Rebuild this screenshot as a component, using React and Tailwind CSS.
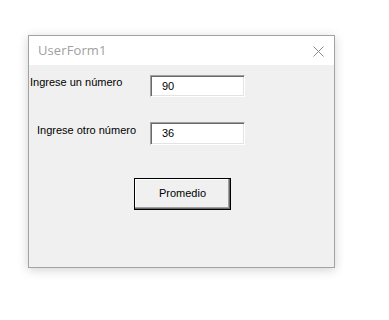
export default function App() {
  const tb =
    "w-[95px] h-[22px] bg-white border-t border-l border-t-[#a0a0a0] border-l-[#a0a0a0] border-r border-b border-r-white border-b-white shadow-[inset_1px_1px_0_#696969,inset_-1px_-1px_0_#e3e3e3] flex items-center pl-[11px] text-[11px] text-black";
  return (
    <div className="w-[389px] h-[320px] bg-white pt-[35px] pl-[28px]" style={{ fontFamily: '"Liberation Sans", Arial, sans-serif' }}>
      <div className="w-[307px] h-[233px] border border-[#a3a3a3] bg-[#f0f0f0] shadow-[0_2px_10px_rgba(0,0,0,0.18)] flex flex-col">
        <div className="h-[29px] bg-white flex items-center justify-between pl-[9px] pr-[10px]">
          <span className="text-[13px] text-[#a0a0a0] tracking-[0.1px]" style={{ fontFamily: '"Open Sans", "Noto Sans", sans-serif' }}>UserForm1</span>
          <svg width="11" height="11" viewBox="0 0 11 11" className="mt-[1px]">
            <path d="M0.5 0.5 L10.5 10.5 M10.5 0.5 L0.5 10.5" stroke="#8a8a8a" strokeWidth="1" fill="none" />
          </svg>
        </div>
        <div className="flex flex-col pt-[10px]">
          <div className="flex items-start">
            <div className="w-[121px] pl-[1px] pt-[1px] text-[11px] text-black leading-[13px]">Ingrese un número</div>
            <div className={tb}>90</div>
          </div>
          <div className="flex items-start mt-[25px]">
            <div className="w-[121px] pl-[8px] pt-[2px] text-[11px] text-black leading-[13px]">Ingrese otro número</div>
            <div className={tb + " h-[23px]"}>36</div>
          </div>
          <div className="mt-[33px] ml-[105px]">
            <div className="w-[97px] h-[32px] border border-black bg-[#f0f0f0] shadow-[inset_-1px_-1px_0_#696969,inset_-2px_-2px_0_#a0a0a0,inset_1px_1px_0_#ffffff] flex items-center justify-center text-[11px] text-black pb-[1px]">
              Promedio
            </div>
          </div>
        </div>
      </div>
    </div>
  );
}
